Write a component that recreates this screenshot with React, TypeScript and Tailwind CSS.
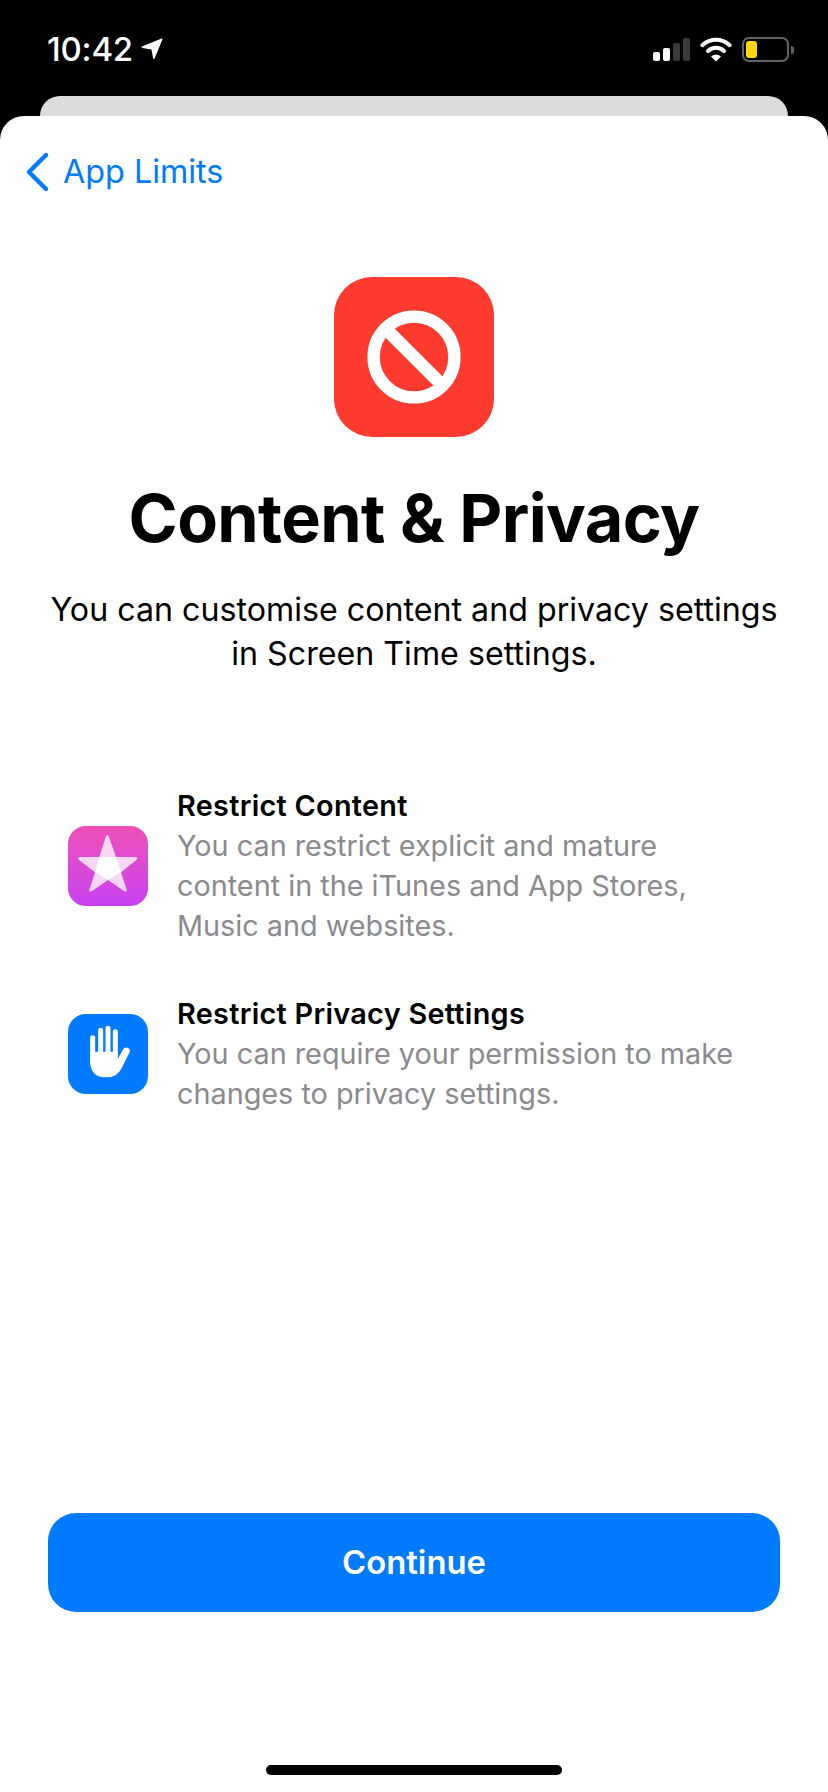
export default function App() {
  const font = { fontFamily: 'Inter, "Liberation Sans", sans-serif' };
  return (
    <div style={font} className="w-[828px] h-[1792px] bg-black flex flex-col overflow-hidden">
      {/* Status bar */}
      <div className="h-[96px] flex items-start justify-between pt-[33px] pl-[47px] pr-[34px]">
        <div className="flex items-center gap-[8px] h-[32px]">
          <span className="text-white text-[33px] leading-[32px] font-medium tracking-[-0.2px]">10:42</span>
          <svg width="22" height="22" viewBox="0 0 22 22">
            <path d="M0.8 8.6 L20.6 0.6 Q21.6 0.4 21.4 1.4 L13.6 20.6 Q12.8 21.6 12.2 20.4 L10.4 11.4 L1.2 10 Q0 9.2 0.8 8.6Z" fill="#fff" />
          </svg>
        </div>
        <div className="flex items-start mt-[4px]">
          <svg width="37" height="24" viewBox="0 0 37 24" className="mt-[1px]">
            <rect x="0" y="14" width="7" height="9" rx="2" fill="#fff" />
            <rect x="10" y="10" width="7" height="13" rx="2" fill="#fff" />
            <rect x="20" y="5" width="7" height="18" rx="2" fill="#3a3a3c" />
            <rect x="30" y="0" width="7" height="23" rx="2" fill="#3a3a3c" />
          </svg>
          <svg width="32" height="25" viewBox="0 0 32 25" className="ml-[10px]">
            <path d="M2.4 8.2 A20 20 0 0 1 29.6 8.2" fill="none" stroke="#fff" strokeWidth="4" strokeLinecap="round" />
            <path d="M8 14 A11.6 11.6 0 0 1 24 14" fill="none" stroke="#fff" strokeWidth="4" strokeLinecap="round" />
            <path d="M16 24.5 L11 19.4 Q16 15.6 21 19.4 Z" fill="#fff" />
          </svg>
          <div className="flex items-center gap-[2px] ml-[10px]">
            <div className="w-[47px] h-[25px] rounded-[7px] border-[2px] border-[#636366] p-[2px]">
              <div className="w-[11px] h-full rounded-[3px] bg-[#ffd60a]" />
            </div>
            <div className="w-[3px] h-[8px] rounded-r-[3px] bg-[#636366]" />
          </div>
        </div>
      </div>

      {/* Card behind */}
      <div className="h-[20px] mx-[40px] bg-[#dcdcde] rounded-t-[20px] shrink-0" />

      {/* Sheet */}
      <div className="flex-1 bg-white rounded-t-[24px] flex flex-col items-center relative">
        <div className="self-start flex items-center h-[58px] mt-[27px] pl-[25px] gap-[14px]">
          <svg width="24" height="40" viewBox="0 0 24 40">
            <path d="M21 3 L4 20 L21 37" fill="none" stroke="#007aff" strokeWidth="4.4" strokeLinecap="round" strokeLinejoin="round" />
          </svg>
          <span className="text-[#007aff] text-[32.3px] leading-[40px]">App Limits</span>
        </div>

        <div className="mt-[76px] w-[160px] h-[160px] rounded-[38px] bg-[#ff3b30] flex items-center justify-center">
          <svg width="94" height="94" viewBox="0 0 94 94">
            <circle cx="47" cy="47" r="40.4" fill="none" stroke="#fff" strokeWidth="12.4" />
            <line x1="19" y1="19" x2="75" y2="75" stroke="#fff" strokeWidth="13" />
          </svg>
        </div>

        <h1 className="mt-[41px] text-black text-[66.5px] leading-[80px] font-bold tracking-[-0.6px] whitespace-nowrap">Content &amp; Privacy</h1>

        <p className="mt-[30px] w-[760px] text-center text-black text-[32.2px] leading-[44px]">
          You can customise content and privacy settings
          <br />
          in Screen Time settings.
        </p>

        <div className="mt-[110px] w-full pl-[68px] pr-[40px] flex flex-col gap-[48px]">
          <div className="flex items-center gap-[29px]">
            <div className="w-[80px] h-[80px] rounded-[18px] bg-gradient-to-b from-[#ee4fb6] to-[#c93ff0] shrink-0">
              <svg width="80" height="80" viewBox="55 47 240 240">
                <path d="M173 75 Q177 75 178 80 L199 140 L258 140 Q266 142 261 148 L214 186 L231 238 Q231 247 224 243 L175 209 L126 243 Q118 247 119 238 L136 186 L87 148 Q82 142 90 140 L149 140 L168 80 Q169 75 173 75Z" fill="#fff" fillOpacity="0.78" />
                <path d="M149 140 L199 140 L214 186 L175 209 L136 186Z" fill="#fff" />
              </svg>
            </div>
            <div className="text-[28.8px] leading-[40px]">
              <div className="text-black font-semibold tracking-[0.3px]">Restrict Content</div>
              <div className="text-[#8a8a8e]">
                You can restrict explicit and mature
                <br />
                content in the iTunes and App Stores,
                <br />
                Music and websites.
              </div>
            </div>
          </div>

          <div className="flex items-center gap-[29px]">
            <div className="w-[80px] h-[80px] rounded-[18px] bg-[#007aff] shrink-0">
              <svg width="80" height="80" viewBox="55 42 240 240">
                <path d="M129 113 L129 190 M153 91 L153 170 M175 85 L175 170 M197 95 L197 170" stroke="#fff" strokeWidth="15" strokeLinecap="round" fill="none" />
                <path d="M122 155 L204 155 L204 178 L219 150 Q224 141 233 143 Q243 146 240 156 L218 200 Q205 232 170 232 Q122 232 122 185 Z" fill="#fff" />
              </svg>
            </div>
            <div className="text-[28.8px] leading-[40px]">
              <div className="text-black font-semibold tracking-[0.3px]">Restrict Privacy Settings</div>
              <div className="text-[#8a8a8e]">
                You can require your permission to make
                <br />
                changes to privacy settings.
              </div>
            </div>
          </div>
        </div>

        <button className="mt-auto mb-[180px] w-[732px] h-[99px] rounded-[28px] bg-[#007aff] text-white text-[32.8px] font-semibold">Continue</button>

        <div className="absolute bottom-[17px] left-1/2 -translate-x-1/2 w-[296px] h-[10px] rounded-full bg-black" />
      </div>
    </div>
  );
}
